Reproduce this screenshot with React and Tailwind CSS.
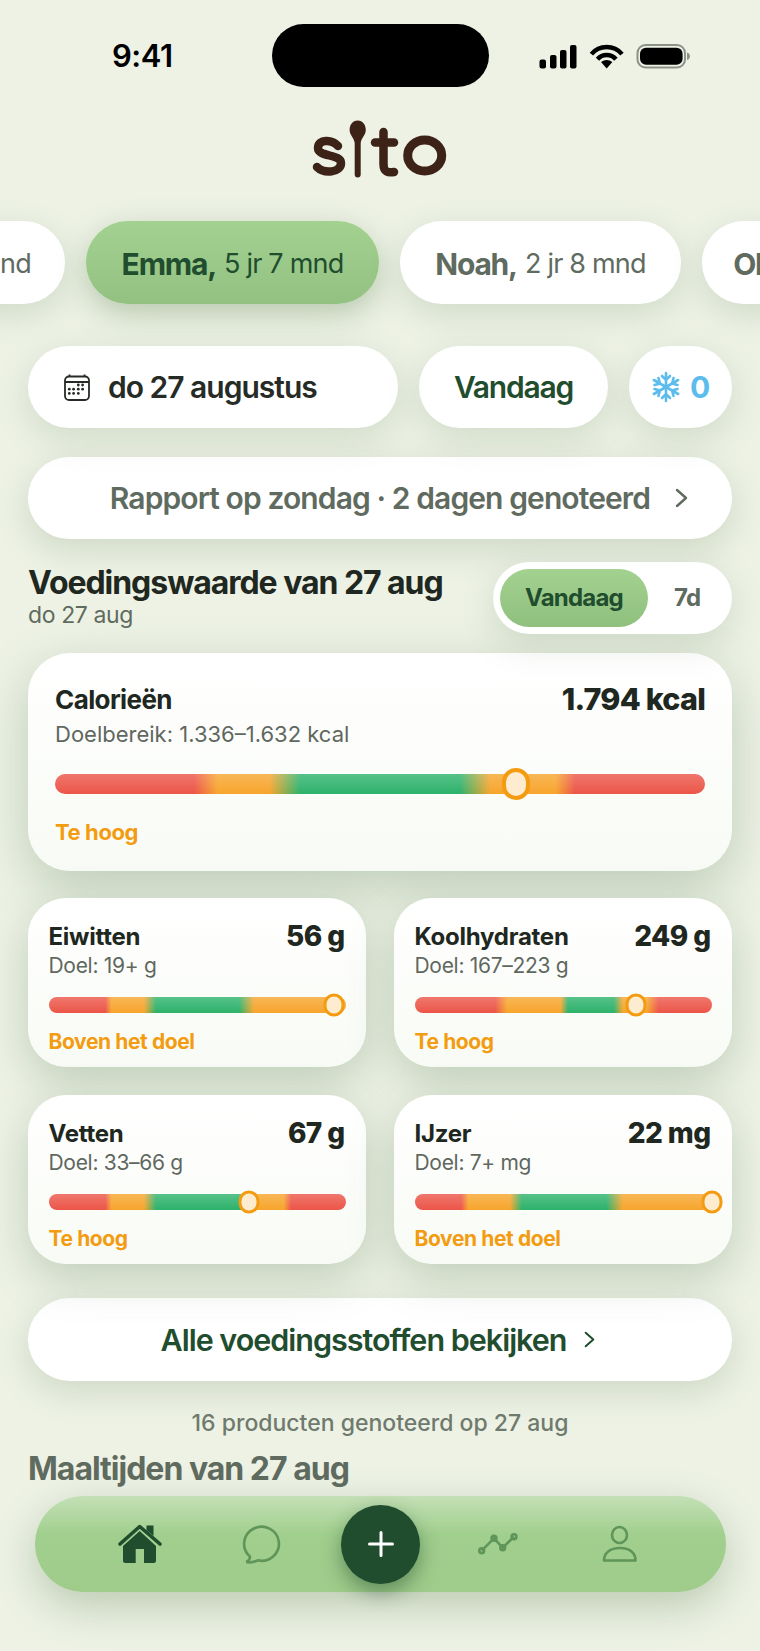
import React from "react";

// bar colours: [colour, start %, end %] for each zone, blended between zones
const RED = "#ec5548";
const ORANGE = "#f7a52c";
const GREEN = "#2db26b";

const makeGradient = (stops) =>
    `linear-gradient(90deg, ${stops.map(([c, p]) => `${c} ${p}%`).join(", ")})`;

const zones = (a, b, c, d, e, f, g, h) => {
    const stops = [
        [RED, 0], [RED, a], [ORANGE, b], [ORANGE, c],
        [GREEN, d], [GREEN, e], [ORANGE, f],
    ];
    if (g === undefined) return [...stops, [ORANGE, 100]];
    return [...stops, [ORANGE, g], [RED, h], [RED, 100]];
};

const NUTRIENTS = [
    { name: "Eiwitten", value: "56 g", goal: "Doel: 19+ g", label: "Boven het doel", pos: 96, stops: zones(19, 21, 32, 36, 64, 69) },
    { name: "Koolhydraten", value: "249 g", goal: "Doel: 167–223 g", label: "Te hoog", pos: 74.6, stops: zones(27, 31, 49, 51.5, 67, 70, 78, 82) },
    { name: "Vetten", value: "67 g", goal: "Doel: 33–66 g", label: "Te hoog", pos: 67.4, stops: zones(19, 21, 32, 36, 64, 66, 79, 81.5) },
    { name: "IJzer", value: "22 mg", goal: "Doel: 7+ mg", label: "Boven het doel", pos: 100, stops: zones(15.5, 18, 32, 36, 64.5, 70) },
];

const StatusIcons = () => (
    <svg width="170" height="50" viewBox="0 0 170 50" className="ml-[41px]">
        <rect x="9.5" y="28.5" width="6.5" height="9" rx="2" />
        <rect x="20" y="24" width="6.5" height="13.5" rx="2" />
        <rect x="30" y="19" width="6.5" height="18.5" rx="2" />
        <rect x="40" y="14" width="6.5" height="23.5" rx="2" />
        <path d="M61.4 23.1A20 20 0 0 1 92 23.1" fill="none" stroke="#000" strokeWidth="4.5" />
        <path d="M67.5 28.3A12 12 0 0 1 85.9 28.3" fill="none" stroke="#000" strokeWidth="4.5" />
        <path d="M76.7 37.5L71 31Q76.7 27 82.4 31Z" />
        <rect x="107.5" y="14" width="47.5" height="22.5" rx="8" fill="none" stroke="#8d9289" strokeWidth="2" />
        <rect x="110" y="16.8" width="42.6" height="17" rx="6" />
        <path d="M157 21.5c2 .5 3 2 3 3.7s-1 3.2-3 3.8z" fill="#8d9289" />
    </svg>
);

const Logo = () => (
    <svg width="200" height="80" viewBox="0 0 200 80" fill="none" stroke="#3d2317" strokeLinecap="round" className="mx-auto mt-[23px]">
        <path d="M58 36C52 29 38 29 38 38C38 47 61 44 61 53C61 63 44 64 37 57" strokeWidth="8.5" />
        <path d="M77.7 10.5C83 10.5 85.8 15 85.8 20C85.8 25 81.2 28 80.7 33V64.5A3 3 0 0 1 74.7 64.5V33C74.2 28 69.6 25 69.6 20C69.6 15 72.4 10.5 77.7 10.5Z" fill="#3d2317" stroke="none" />
        <path d="M103.5 22V54C103.5 62 108 63 114 62" strokeWidth="8.5" />
        <path d="M95 32.5H114" strokeWidth="8.5" />
        <ellipse cx="144.7" cy="45.5" rx="17" ry="15.5" strokeWidth="9" />
    </svg>
);

const CalendarIcon = () => (
    <svg width="26" height="27" viewBox="0 0 26 27" fill="none" stroke="#262b26" strokeWidth="1.8">
        <rect x="1" y="2.5" width="24" height="23.5" rx="4" />
        <path d="M1 8H25M5.5 0.5V3M20.5 0.5V3" />
        <g fill="#262b26" stroke="none">
            <circle cx="14.3" cy="11" r="1.4" /><circle cx="18.6" cy="11" r="1.4" />
            <circle cx="5.3" cy="15.2" r="1.4" /><circle cx="9.6" cy="15.2" r="1.4" /><circle cx="14.3" cy="15.2" r="1.4" /><circle cx="18.6" cy="15.2" r="1.4" />
            <circle cx="5.3" cy="19.4" r="1.4" /><circle cx="9.6" cy="19.4" r="1.4" /><circle cx="14.3" cy="19.4" r="1.4" />
        </g>
    </svg>
);

const SnowIcon = () => (
    <svg width="30" height="32" viewBox="-15 -16 30 32" fill="none" stroke="#5cbcec" strokeWidth="2.6" strokeLinecap="round">
        {[0, 60, 120].map((r) => (
            <g key={r} transform={`rotate(${r})`}>
                <path d="M0 -14V14M-4 -11L0 -7L4 -11M-4 11L0 7L4 11" />
            </g>
        ))}
    </svg>
);

const Chevron = ({ className = "", color }) => (
    <svg viewBox="0 0 13 20" fill="none" stroke={color} strokeWidth="2.4" strokeLinecap="round" strokeLinejoin="round" className={className}>
        <path d="M2 2L11 10L2 18" />
    </svg>
);

const ChildPill = ({ name, age, width, active }) => (
    <div className={`flex h-[83px] shrink-0 items-center justify-center rounded-full pt-[3px] ${width} ${active
        ? "bg-gradient-to-b from-[#a3d190] to-[#93c182] text-[#1f4d2e] shadow-[0_10px_30px_rgba(80,120,70,0.34)]"
        : "bg-white text-[#5f6b5f] shadow-[0_10px_32px_rgba(80,110,70,0.18)]"}`}>
        <span className="text-[30px] font-bold tracking-[-1.2px]">{name},</span>
        <span className="ml-[8px] text-[27px] tracking-[-0.8px]">{age}</span>
    </div>
);

const Bar = ({ stops, pos, big }) => (
    <div className={`relative rounded-full ${big ? "h-[20px]" : "h-[16px]"}`}>
        <div className="h-full rounded-full" style={{ background: makeGradient(stops) }} />
        <div className="absolute inset-0 rounded-full bg-gradient-to-b from-white/20 to-transparent" />
        <div
            className={`absolute top-1/2 -translate-x-1/2 -translate-y-1/2 rounded-full border-solid border-[#f39c12] bg-[#fdeccf] ${big ? "h-[32px] w-[28px] border-[4px]" : "h-[23px] w-[21px] border-[3px]"}`}
            style={{ left: `${pos}%` }}
        />
    </div>
);

const SmallCard = ({ name, value, goal, label, pos, stops }) => (
    <div className="h-[169px] rounded-[38px] bg-gradient-to-b from-white to-[#f8fbf5] px-[20.5px] pt-[24px] shadow-[0_14px_44px_rgba(70,110,70,0.27)]">
        <div className="flex h-[30px] items-center justify-between">
            <span className="text-[24px] font-bold leading-[30px] tracking-[-0.25px] text-[#202720]">{name}</span>
            <span className="-mt-[3px] mr-[1px] text-[28px] font-extrabold leading-[30px] tracking-[-0.6px] text-[#202720]">{value}</span>
        </div>
        <div className="mt-[1px] text-[21px] leading-[26px] tracking-[-0.3px] text-[#5f675f]">{goal}</div>
        <div className="mt-[18px]"><Bar stops={stops} pos={pos} /></div>
        <div className="mt-[16px] text-[21px] font-bold leading-[26px] tracking-[-0.4px] text-[#f39c12]">{label}</div>
    </div>
);

const BottomNav = () => (
    <div className="absolute left-[35px] top-[1496px] grid h-[96px] w-[691px] grid-cols-[repeat(5,120px)] items-center justify-center rounded-full bg-gradient-to-b from-[#c4e0b6] via-[#a1cf8e] via-40% to-[#9fcc8b] shadow-[0_14px_40px_rgba(80,120,70,0.32)]">
        <svg width="60" height="50" viewBox="12 15 60 50" className="justify-self-center">
            <path d="M24 42L40.7 27L57 42V56.5Q57 59 54.5 59H45V45H36.7V59H26.5Q24 59 24 56.5Z" fill="#1f4d2e" />
            <path d="M21 40L40.7 22.5L61 40" fill="none" stroke="#1f4d2e" strokeWidth="3.6" strokeLinecap="round" strokeLinejoin="round" />
            <path d="M47.5 26V21.5H54.5V32Z" fill="#1f4d2e" />
        </svg>
        <svg width="60" height="50" viewBox="131 13 60 50" className="justify-self-center" fill="none" stroke="#5f9559" strokeWidth="2.6" strokeLinejoin="round">
            <path d="M157.5 54.3A17.4 17 0 1 0 150 50.5C150 52.5 149 54.5 147 55.5C147 56.2 147.5 56.5 148 56.5C151 56.5 154.5 56 157.5 54.3Z" />
        </svg>
        <button className="flex h-[79px] w-[79px] items-center justify-center justify-self-center rounded-full bg-[#1f4d2e] shadow-[0_8px_20px_rgba(20,60,30,0.45)]">
            <svg width="26" height="26" viewBox="0 0 26 26" stroke="#fff" strokeWidth="3" strokeLinecap="round">
                <path d="M13 1.5V24.5M1.5 13H24.5" />
            </svg>
        </button>
        <svg width="60" height="50" viewBox="11 14 60 50" className="justify-self-center" fill="none" stroke="#5f9559" strokeWidth="2.6">
            <path d="M21.7 45.7L34 33.3L42.7 42.7L54 31.7" />
            <circle cx="21.7" cy="45.7" r="2.4" /><circle cx="34" cy="33.3" r="2.4" /><circle cx="42.7" cy="42.7" r="2.4" /><circle cx="54" cy="31.7" r="2.4" />
        </svg>
        <svg width="60" height="50" viewBox="131 14 60 50" className="justify-self-center" fill="none" stroke="#5f9559" strokeWidth="2.6" strokeLinejoin="round">
            <ellipse cx="159.5" cy="30" rx="7.5" ry="8" />
            <path d="M144 55.5C144 48 150 43 160 43C170 43 175.5 48 175.5 55.5Z" />
        </svg>
    </div>
);

export default function App() {
    return (
        <div className="relative h-[1651px] w-[760px] overflow-hidden bg-[#edf2e5] font-['Inter',sans-serif]">
            {/* status bar */}
            <div className="grid grid-cols-[272px_217px_1fr] items-center pt-[24px]">
                <span className="pl-[112px] text-[31px] font-semibold leading-[63px] tracking-[-0.5px] text-black">9:41</span>
                <div className="h-[63px] rounded-full bg-black" />
                <StatusIcons />
            </div>

            <Logo />

            {/* kinderen */}
            <div className="mt-[31px] ml-[-228px] flex gap-[21px]">
                <ChildPill name="Sanne" age="8 jr 4 mnd" width="w-[293px]" />
                <ChildPill name="Emma" age="5 jr 7 mnd" width="w-[293px]" active />
                <ChildPill name="Noah" age="2 jr 8 mnd" width="w-[281px]" />
                <ChildPill name="Olivia" age="1 jr 2 mnd" width="w-[270px]" />
            </div>

            <div className="px-[28px]">
                {/* datum */}
                <div className="mt-[42px] flex h-[82px] gap-[21px]">
                    <div className="flex w-[370px] items-center gap-[18px] rounded-full bg-white pl-[36px] shadow-[0_10px_34px_rgba(80,110,70,0.18)]">
                        <CalendarIcon />
                        <span className="text-[30px] font-semibold tracking-[-1px] text-[#262b26]">do 27 augustus</span>
                    </div>
                    <div className="flex w-[189px] items-center justify-center rounded-full bg-white text-[30px] font-semibold tracking-[-1.2px] text-[#1f4d2e] shadow-[0_10px_34px_rgba(80,110,70,0.18)]">
                        Vandaag
                    </div>
                    <div className="flex w-[103px] items-center justify-center gap-[9px] rounded-full bg-white shadow-[0_10px_34px_rgba(80,110,70,0.18)]">
                        <SnowIcon />
                        <span className="text-[30px] font-bold text-[#5cbcec]">0</span>
                    </div>
                </div>

                <div className="mt-[29px] flex h-[82px] items-center justify-end gap-[25px] rounded-full bg-white pr-[44px] shadow-[0_10px_34px_rgba(80,110,70,0.2)]">
                    <span className="text-[30px] font-semibold tracking-[-0.9px] text-[#5f6b5f]">Rapport op zondag · 2 dagen genoteerd</span>
                    <Chevron color="#5f6b5f" className="h-[20px] w-[13px]" />
                </div>

                {/* voedingswaarde kop */}
                <div className="mt-[23px] flex h-[72px] items-start justify-between">
                    <div className="pt-[2px]">
                        <div className="text-[32px] font-bold leading-[38px] tracking-[-1.05px] text-[#202720]">Voedingswaarde van 27 aug</div>
                        <div className="text-[23px] leading-[26px] tracking-[-0.4px] text-[#5f6b5f]">do 27 aug</div>
                    </div>
                    <div className="flex h-[72px] w-[239px] items-center rounded-full bg-white pl-[7px] shadow-[0_10px_34px_rgba(80,110,70,0.18)]">
                        <div className="flex h-[58px] w-[148px] items-center justify-center rounded-full bg-gradient-to-b from-[#a3d190] to-[#8fc07e] text-[24px] font-bold tracking-[-0.8px] text-[#1f4d2e]">
                            Vandaag
                        </div>
                        <span className="ml-[26px] text-[24px] font-bold tracking-[-0.8px] text-[#5f6b5f]">7d</span>
                    </div>
                </div>

                {/* calorieën */}
                <div className="mt-[19px] h-[218px] rounded-[42px] bg-gradient-to-b from-white to-[#f8fbf5] px-[27px] pt-[30px] shadow-[0_16px_50px_rgba(70,110,70,0.28)]">
                    <div className="flex h-[32px] items-center justify-between">
                        <span className="text-[26px] font-bold tracking-[-0.6px] text-[#202720]">Calorieën</span>
                        <span className="text-[30.5px] font-extrabold tracking-[-0.8px] text-[#202720]">1.794 kcal</span>
                    </div>
                    <div className="mt-[5px] text-[22px] leading-[28px] text-[#5f675f]">Doelbereik: 1.336–1.632 kcal</div>
                    <div className="mt-[26px]"><Bar big pos={70.9} stops={zones(21.4, 25, 33, 37.7, 62.3, 67, 77, 80)} /></div>
                    <div className="mt-[24px] text-[22px] font-bold leading-[28px] tracking-[-0.4px] text-[#f39c12]">Te hoog</div>
                </div>

                {/* macro's */}
                <div className="mt-[27px] grid grid-cols-2 gap-[28px]">
                    {NUTRIENTS.map((n) => <SmallCard key={n.name} {...n} />)}
                </div>

                <div className="mt-[34px] flex h-[83px] items-center justify-center gap-[17px] rounded-full bg-white shadow-[0_10px_34px_rgba(80,110,70,0.2)]">
                    <span className="text-[30.5px] font-semibold tracking-[-1px] text-[#1f4d2e]">Alle voedingsstoffen bekijken</span>
                    <Chevron color="#1f4d2e" className="mr-[5px] h-[17px] w-[11px]" />
                </div>

                <div className="mt-[28px] text-center text-[23px] font-medium leading-[28px] text-[#6f7a6e]">16 producten genoteerd op 27 aug</div>
                <div className="mt-[12px] text-[32px] font-bold leading-[40px] tracking-[-1px] text-[#5f6b5f]">Maaltijden van 27 aug</div>
            </div>

            <BottomNav />
        </div>
    );
}
